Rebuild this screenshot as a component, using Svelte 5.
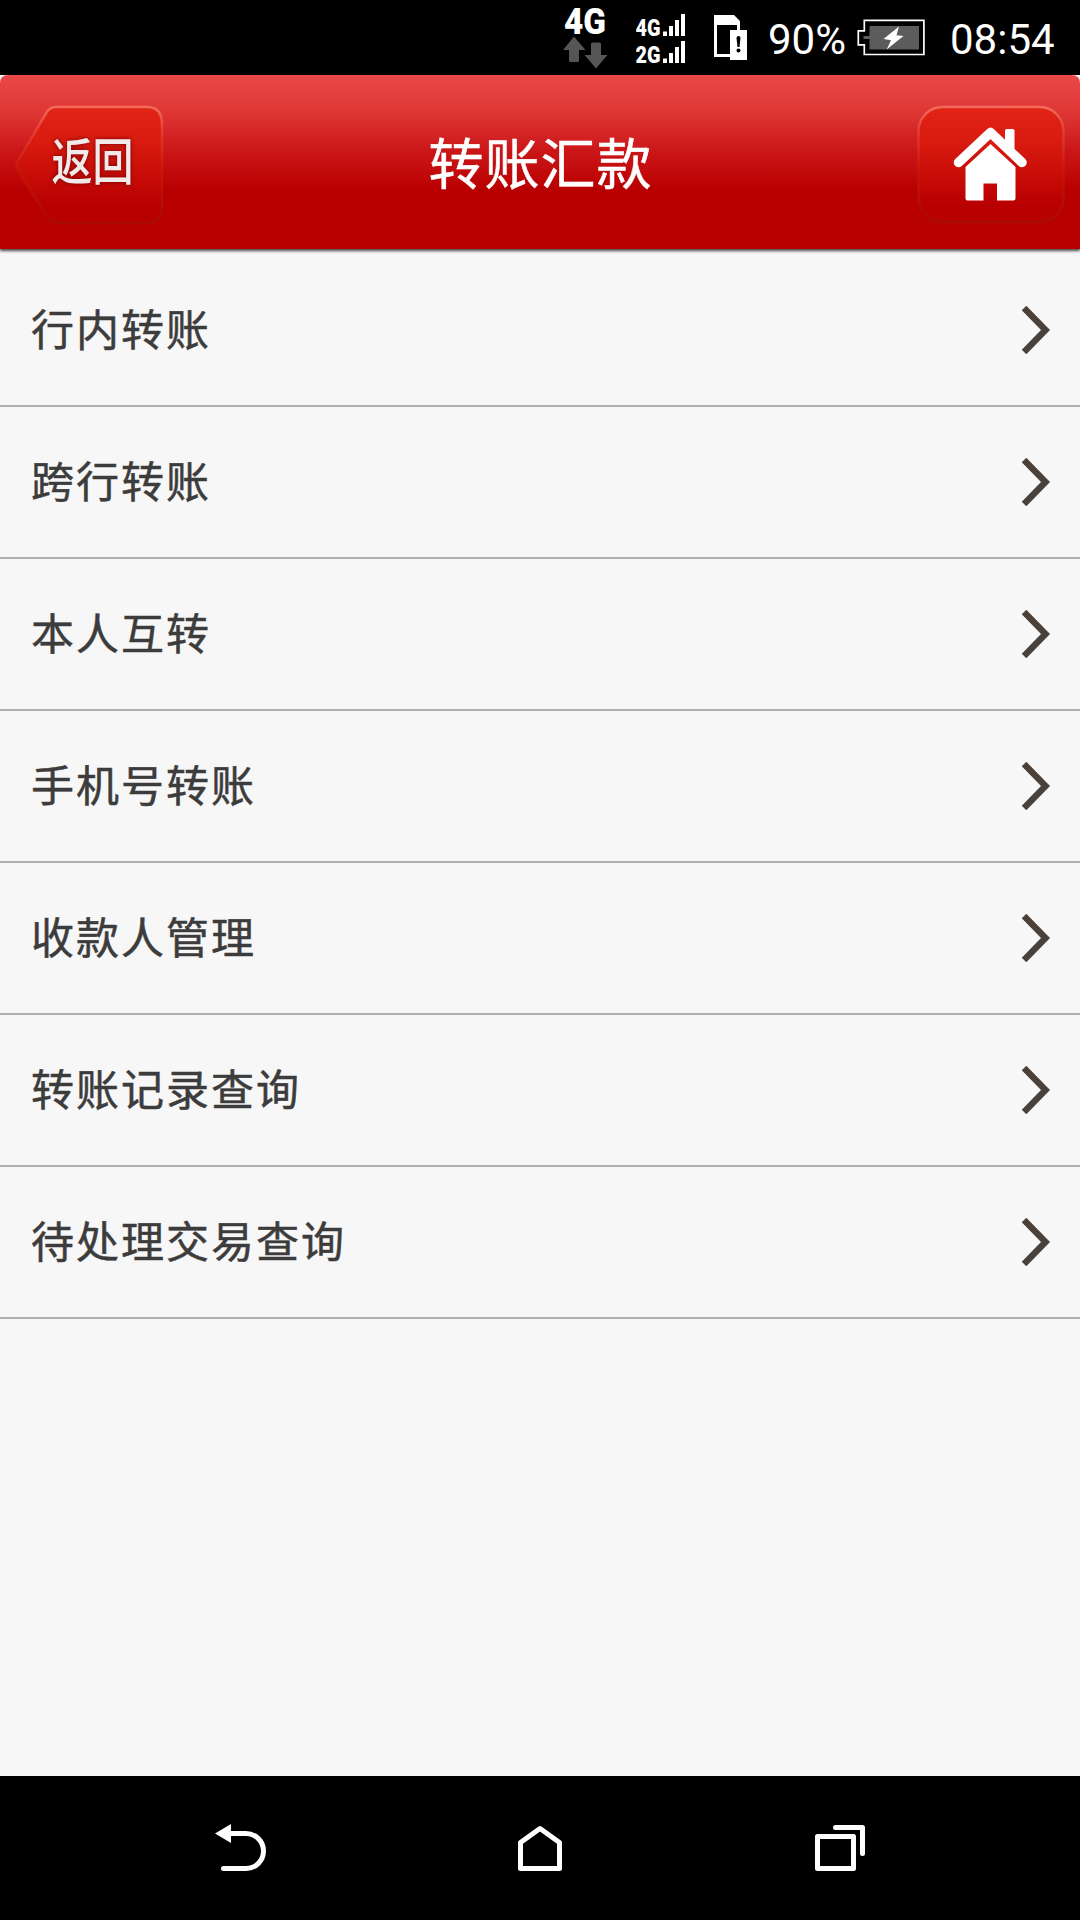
<script>
  const items = [
    "行内转账",
    "跨行转账",
    "本人互转",
    "手机号转账",
    "收款人管理",
    "转账记录查询",
    "待处理交易查询",
  ];
  const sims = [
    { label: "4G", y: 36 },
    { label: "2G", y: 63 },
  ];
</script>

<div class="screen">
  <div class="status">
    <svg class="data" width="48" height="75" viewBox="0 0 48 75">
      <text class="net" x="1" y="33.500" font-size="36" textLength="42" lengthAdjust="spacingAndGlyphs">4G</text>
      <g fill="#555">
        <path d="M11 36.500 22.500 50H16v10.500q0 1.500-1.500 1.500h-7Q6 62 6 60.500V50H0z" />
        <path d="M33 68.500 21.500 55H28V44q0-1.500 1.500-1.500h7Q38 42.500 38 44v11h6.500z" />
      </g>
    </svg>
    <svg class="signal" width="50" height="75" viewBox="0 0 50 75">
      {#each sims as sim}
        <text class="net" x="-0.500" y={sim.y - 0.5} font-size="23" textLength="25" lengthAdjust="spacingAndGlyphs">{sim.label}</text>
        <g fill="#fff">
          <rect x="27" y={sim.y - 4.5} width="4" height="4.500" />
          <rect x="33" y={sim.y - 10} width="4" height="10" />
          <rect x="39" y={sim.y - 16} width="4" height="16" />
          <rect x="45" y={sim.y - 22} width="4" height="22" />
        </g>
      {/each}
    </svg>
    <svg class="sim" width="33" height="75" viewBox="0 0 33 75">
      <path fill="#fff" fill-rule="evenodd" d="M0 15h20l6 6v36H0zM3 25v29h20V25z" />
      <path fill="#fff" d="M16 30h17v30H16z" />
      <path d="M22.500 38q0-2 2-2t2 2l-1 9h-2z" />
      <circle cx="24.500" cy="50.500" r="2" />
    </svg>
    <span class="percent">90%</span>
    <svg class="battery" width="69" height="75" viewBox="0 0 69 75">
      <path fill="none" stroke="#fff" stroke-width="1.700" d="M7.300 20.300h59.600v34.200H7.300v-9.700H1.300v-14h6z" />
      <path fill="#5c5c5c" d="M12.500 26H62v23.500H12.500V39h-6v-3h6z" />
      <path fill="#fff" d="m42 26.500-2.500 8.800 7 .7-16.800 13.500 4.300-9.300-7.500-1.200z" />
    </svg>
    <span class="time">08:54</span>
  </div>

  <header>
    <button class="back">
      <svg width="150" height="122" viewBox="0 0 150 122">
        <defs>
          <linearGradient id="face" x1="0" y1="0" x2="0" y2="1">
            <stop offset="0" stop-color="#e12415" />
            <stop offset="0.300" stop-color="#d91b10" />
            <stop offset="0.850" stop-color="#b90000" />
            <stop offset="1" stop-color="#b90000" />
          </linearGradient>
          <linearGradient id="edge" x1="0" y1="0" x2="0" y2="1">
            <stop offset="0" stop-color="#f26a5b" />
            <stop offset="0.200" stop-color="#e34032" />
            <stop offset="0.550" stop-color="#c91409" />
            <stop offset="1" stop-color="#a80b00" />
          </linearGradient>
        </defs>
        <path class="plate" d="M33 7.500Q37 3 42 3h91q15 0 15 17v82q0 17-15 17H42q-5 0-9-6L4 66q-3-4.500 0-9z" />
        <text class="label" x="37.500" y="62.500" transform="scale(1 1.220)" font-size="41" textLength="82">返回</text>
      </svg>
    </button>
    <h1>转账汇款</h1>
    <button class="home" aria-label="home">
      <svg width="149" height="122" viewBox="0 0 149 122">
        <rect class="plate" x="1.500" y="3" width="145" height="115" rx="24" />
        <path fill="none" stroke="#fff" stroke-width="9.500" stroke-linecap="round" stroke-linejoin="round" d="M41.500 58.500 73.500 28.500 105 58.500" />
        <path fill="#fff" d="M88 26.500q0-1.500 1.500-1.500h6q2 0 2 1.500V48L88 39z" />
        <path fill="#fff" d="m73.500 40 25 23v31.500q0 2-2 2H80v-17H66.500v17H50.500q-2 0-2-2V63z" />
      </svg>
    </button>
  </header>

  <ul>
    {#each items as item}
      <li>
        <span>{item}</span>
        <svg width="28" height="48" viewBox="0 0 28 48">
          <path fill="none" stroke="#4a413b" stroke-width="6.500" d="M2 2 23.500 24 2 46" />
        </svg>
      </li>
    {/each}
  </ul>

  <nav>
    <svg width="52" height="48" viewBox="0 0 52 48">
      <path fill="#fff" d="M0 10.500 16 1v19z" />
      <path class="line" d="M14 10.500h17a17.500 17.500 0 0 1 0 35H8.500" />
    </svg>
    <svg width="46" height="48" viewBox="0 0 46 48">
      <path class="line" d="M3.500 45.500V19.500L23 5.500l19.500 14v26z" />
    </svg>
    <svg width="52" height="48" viewBox="0 0 52 48">
      <path class="line" d="M4.500 13.500h36v32h-36zM22.500 4.500h27v26" />
    </svg>
  </nav>
</div>

<style>
  :global(body) {
    background: #000;
  }
  .screen {
    width: 1080px;
    height: 1920px;
    display: flex;
    flex-direction: column;
    background: #f7f7f7;
    font-family: "Noto Sans CJK SC", sans-serif;
  }
  svg {
    display: block;
    flex: none;
  }
  .status {
    height: 75px;
    flex: none;
    display: flex;
    align-items: center;
    padding-left: 563px;
    background: #000;
    color: #fff;
    font-family: Roboto, sans-serif;
    font-size: 42px;
    line-height: 75px;
    white-space: nowrap;
  }
  .net {
    fill: #fff;
    font-family: Roboto, sans-serif;
    font-weight: 900;
  }
  .signal {
    margin-left: 25px;
  }
  .sim {
    margin-left: 28px;
  }
  .percent {
    width: 80px;
    margin-left: 21px;
    padding-top: 3px;
  }
  .battery {
    margin-left: 9px;
  }
  .time {
    margin-left: 24px;
    padding-top: 3px;
  }
  header {
    height: 174px;
    flex: none;
    display: flex;
    align-items: flex-start;
    justify-content: space-between;
    box-sizing: border-box;
    padding: 29px 14px 0;
    border-radius: 8px 8px 0 0;
    background: linear-gradient(#eb4849 0%, #de3635 22%, #cc1719 43%, #b90000 66%, #b90000 100%);
    box-shadow: 0 2px 3px rgba(0, 0, 0, 0.7);
  }
  button {
    padding: 0;
    border: 0;
    background: none;
  }
  .plate {
    fill: url(#face);
    stroke: url(#edge);
    stroke-width: 2.5px;
  }
  .label {
    fill: #f0eaea;
    font-family: "Noto Sans CJK SC", sans-serif;
    font-weight: 500;
    filter: drop-shadow(0 0 2px #700);
  }
  h1 {
    margin: 0;
    color: #fff;
    font-size: 55px;
    font-weight: 400;
    line-height: 112px;
    letter-spacing: 1px;
    -webkit-text-stroke: 0.5px;
  }
  ul {
    flex: 1;
    margin: 0;
    padding: 6px 0 0;
    list-style: none;
  }
  li {
    height: 152px;
    box-sizing: border-box;
    display: flex;
    align-items: center;
    justify-content: space-between;
    padding: 0 30px 0 31px;
    border-bottom: 2px solid #b0b0b0;
    color: #3c3c3c;
    font-size: 43px;
    letter-spacing: 2px;
    -webkit-text-stroke: 0.5px;
  }
  li span {
    padding-bottom: 6px;
  }
  nav {
    height: 144px;
    flex: none;
    display: flex;
    align-items: center;
    justify-content: space-between;
    box-sizing: border-box;
    padding: 0 215px 2px;
    background: #000;
  }
  .line {
    fill: none;
    stroke: #fff;
    stroke-width: 5px;
    stroke-linecap: round;
    stroke-linejoin: round;
  }
</style>
